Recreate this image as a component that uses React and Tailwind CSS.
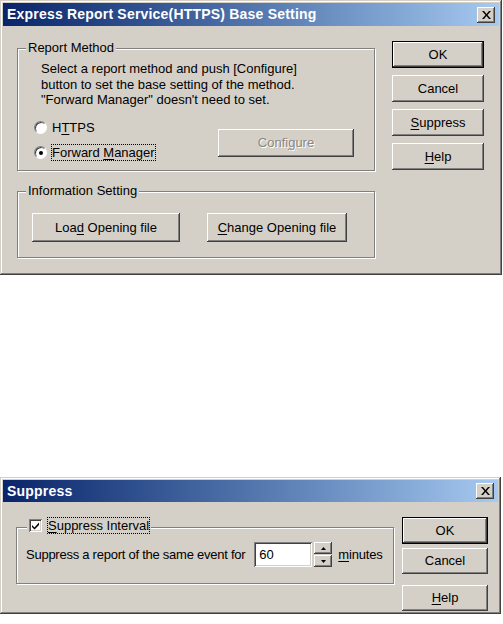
import React from 'react';

const FONT = { fontFamily: '"Liberation Sans", Arial, sans-serif' };

const raised =
  'shadow-[inset_-1px_-1px_0_#404040,inset_1px_1px_0_#ffffff,inset_-2px_-2px_0_#808080,inset_2px_2px_0_#d4d0c8]';
const raisedDefault =
  'border border-black shadow-[inset_-1px_-1px_0_#404040,inset_1px_1px_0_#ffffff,inset_-2px_-2px_0_#808080]';
const sunken =
  'shadow-[inset_1px_1px_0_#808080,inset_-1px_-1px_0_#ffffff,inset_2px_2px_0_#404040,inset_-2px_-2px_0_#d4d0c8]';

function U({ children }) {
  return <span className="underline underline-offset-2">{children}</span>;
}

function Btn({ children, className = '', def = false, disabled = false }) {
  return (
    <div
      className={`flex items-center justify-center bg-[#d4d0c8] text-[13px] ${
        def ? raisedDefault : raised
      } ${disabled ? 'text-[#8c8880] [text-shadow:1px_1px_0_#ffffff]' : 'text-black'} ${className}`}
    >
      <span className="whitespace-pre">{children}</span>
    </div>
  );
}

function TitleBar({ title, className = '' }) {
  return (
    <div
      className={`flex items-center justify-between bg-gradient-to-r from-[#0a246a] to-[#a6caf0] pl-[4px] pr-[4px] ${className}`}
    >
      <span className="text-[14px] font-bold text-white tracking-[0.2px]">{title}</span>
      <div className={`flex h-[16px] w-[18px] items-center justify-center bg-[#d4d0c8] ${raised}`}>
        <svg width="9" height="8" viewBox="0 0 9 8">
          <path d="M0 0h2l2.5 3 2.5-3h2L5.5 4 9 8H7L4.5 5 2 8H0l3.5-4z" fill="#000" />
        </svg>
      </div>
    </div>
  );
}

function Group({ label, className = '', children }) {
  return (
    <div
      className={`relative border border-[#808080] shadow-[1px_1px_0_#ffffff,inset_1px_1px_0_#ffffff] ${className}`}
    >
      {label}
      {children}
    </div>
  );
}

function Radio({ checked, children, focus }) {
  return (
    <div className="flex h-[16px] items-center">
      <div className="relative h-[13px] w-[13px] rounded-full border border-t-[#808080] border-l-[#808080] border-b-white border-r-white bg-white shadow-[inset_1px_1px_0_#404040]">
        {checked && (
          <div className="absolute left-1/2 top-1/2 h-[4px] w-[4px] -translate-x-1/2 -translate-y-1/2 rounded-full bg-black" />
        )}
      </div>
      <span
        className={`ml-[5px] whitespace-pre text-[13px] leading-[15px] ${
          focus ? 'outline outline-1 outline-dotted outline-black' : ''
        }`}
      >
        {children}
      </span>
    </div>
  );
}

export default function App() {
  return (
    <div className="min-h-[624px] w-[503px] bg-white" style={FONT}>
      {/* Base Setting dialog */}
      <div className="flex h-[275px] w-[502px] flex-col bg-[#d4d0c8] p-[3px] shadow-[inset_-1px_-1px_0_#404040,inset_1px_1px_0_#d4d0c8,inset_-2px_-2px_0_#808080,inset_2px_2px_0_#ffffff]">
        <TitleBar title="Express Report Service(HTTPS) Base Setting" className="h-[23px]" />
        <div className="flex items-start pl-[14px]">
          <div className="mt-[22px] w-[358px]">
            <Group
              className="h-[123px]"
              label={
                <span className="absolute -top-[9px] left-[8px] bg-[#d4d0c8] px-[2px] text-[13px] leading-[16px]">
                  Report Method
                </span>
              }
            >
              <div className="pl-[23px] pt-[12px] text-[13px] leading-[15.5px]">
                <p>Select a report method and push [Configure]</p>
                <p>button to set the base setting of the method.</p>
                <p>"Forward Manager" doesn't need to set.</p>
              </div>
              <div className="mt-[12px] flex items-start pl-[16px]">
                <div className="flex flex-col gap-[9px]">
                  <Radio>
                    H<U>T</U>TPS
                  </Radio>
                  <Radio checked focus>
                    Forward <U>M</U>anager
                  </Radio>
                </div>
                <Btn disabled className="ml-auto mr-[20px] mt-[9px] h-[28px] w-[136px]">
                  Confi<U>g</U>ure
                </Btn>
              </div>
            </Group>
            <Group
              className="mt-[20px] h-[67px]"
              label={
                <span className="absolute -top-[9px] left-[8px] bg-[#d4d0c8] px-[2px] text-[13px] leading-[16px]">
                  Information Setting
                </span>
              }
            >
              <div className="flex pl-[14px] pt-[21px]">
                <Btn className="h-[29px] w-[148px]">
                  Loa<U>d</U> Opening file
                </Btn>
                <Btn className="ml-[27px] h-[29px] w-[140px]">
                  <U>C</U>hange Opening file
                </Btn>
              </div>
            </Group>
          </div>
          <div className="ml-[17px] mt-[15px] flex w-[92px] flex-col gap-[7px]">
            <Btn def className="h-[27px]">OK</Btn>
            <Btn className="h-[27px]">Cancel</Btn>
            <Btn className="h-[27px]">
              <U>S</U>uppress
            </Btn>
            <Btn className="h-[27px]">
              <U>H</U>elp
            </Btn>
          </div>
        </div>
      </div>

      {/* Suppress dialog */}
      <div className="mt-[202px] flex h-[137px] w-[501px] flex-col bg-[#d4d0c8] p-[3px] shadow-[inset_-1px_-1px_0_#404040,inset_1px_1px_0_#d4d0c8,inset_-2px_-2px_0_#808080,inset_2px_2px_0_#ffffff]">
        <TitleBar title="Suppress" className="h-[22px]" />
        <div className="flex items-start pl-[13px]">
          <Group
            className="mt-[25px] h-[57px] w-[378px] shrink-0"
            label={
              <div className="absolute -top-[10px] left-[10px] flex items-center bg-[#d4d0c8] px-[2px]">
                <div className={`flex h-[13px] w-[13px] items-center justify-center bg-white ${sunken}`}>
                  <svg width="9" height="9" viewBox="0 0 9 9">
                    <path d="M1 4l2.5 2.5L8 1.5v2.5L3.5 8.5 1 6z" fill="#000" />
                  </svg>
                </div>
                <span className="ml-[6px] whitespace-pre text-[13px] leading-[15px] outline outline-1 outline-dotted outline-black">
                  <U>S</U>uppress Interval
                </span>
              </div>
            }
          >
            <div className="flex items-center whitespace-nowrap pl-[9px] pt-[14px] text-[13px]">
              <span className="shrink-0 tracking-[-0.25px]">Suppress a report of the same event for</span>
              <div className={`ml-[9px] h-[25px] w-[58px] shrink-0 bg-white pl-[5px] pt-[3px] ${sunken}`}>60</div>
              <div className="ml-[2px] flex h-[25px] w-[18px] shrink-0 flex-col">
                <div className={`flex h-[12px] items-center justify-center bg-[#d4d0c8] ${raised}`}>
                  <svg width="5" height="3" viewBox="0 0 5 3">
                    <path d="M2.5 0L5 3H0z" fill="#000" />
                  </svg>
                </div>
                <div className={`mt-[1px] flex h-[12px] items-center justify-center bg-[#d4d0c8] ${raised}`}>
                  <svg width="5" height="3" viewBox="0 0 5 3">
                    <path d="M0 0h5L2.5 3z" fill="#000" />
                  </svg>
                </div>
              </div>
              <span className="ml-[6px] shrink-0 tracking-[-0.2px]">
                <U>m</U>inutes
              </span>
            </div>
          </Group>
          <div className="ml-[8px] mt-[15px] flex w-[86px] flex-col">
            <Btn def className="h-[27px]">OK</Btn>
            <Btn className="mt-[4px] h-[26px]">Cancel</Btn>
            <Btn className="mt-[11px] h-[26px]">
              <U>H</U>elp
            </Btn>
          </div>
        </div>
      </div>
    </div>
  );
}
